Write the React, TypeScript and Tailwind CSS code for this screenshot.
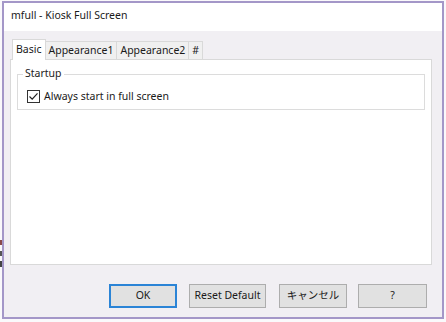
import React from "react";

const font = { fontFamily: '"Noto Sans", "Noto Sans CJK JP", sans-serif' };

function Tab({ label, selected }: { label: string; selected?: boolean }) {
  if (selected) {
    return (
      <div className="relative z-10 -mb-px flex h-[21px] items-center whitespace-nowrap border border-b-0 border-[#d9d9d9] bg-white px-[3px] text-[10.5px] text-[#1a1a1a]">
        {label}
      </div>
    );
  }
  return (
    <div className="-ml-px mt-[2px] flex h-[18px] items-center whitespace-nowrap border border-b-0 border-[#d9d9d9] bg-[#f0f0f0] px-[3px] text-[10.5px] text-[#1a1a1a]">
      {label}
    </div>
  );
}

function Btn({ label, w, primary, className = "" }: { label: string; w: string; primary?: boolean; className?: string }) {
  return (
    <div
      className={`flex h-[24px] items-center justify-center whitespace-nowrap text-[10.5px] text-[#1a1a1a] ${w} ${
        primary ? "border-2 border-[#2b84d6] bg-[#e1e1e1]" : "border border-[#adadad] bg-[#e1e1e1]"
      } ${className}`}
    >
      {label}
    </div>
  );
}

export default function App() {
  return (
    <div className="relative h-[322px] w-[446px] overflow-hidden bg-[#faf9fb]" style={font}>
      {/* desktop bits behind the window */}
      <div className="absolute left-0 top-[240px] h-[5px] w-[2px] bg-[#8a4a4a]" />
      <div className="absolute left-0 top-[251px] h-[5px] w-[2px] bg-[#555]" />
      <div className="absolute left-0 top-[261px] h-[6px] w-[2px] bg-[#444]" />

      <div className="ml-[2px] mt-[1px] flex h-[318px] w-[442px] flex-col border-2 border-[#a497c8] bg-[#f1eff3]">
        {/* title bar */}
        <div className="flex h-[28px] items-center whitespace-nowrap bg-white pb-[2px] pl-[7px] text-[10.5px] text-[#1a1a1a]">
          mfull - Kiosk Full Screen
        </div>

        {/* body */}
        <div className="flex flex-1 flex-col pl-[6px] pr-[10px] pt-[8px]">
          <div className="flex items-start pl-[2px]">
            <Tab label="Basic" selected />
            <Tab label="Appearance1" />
            <Tab label="Appearance2" />
            <Tab label="#" />
          </div>
          <div className="h-[206px] border border-[#d9d9d9] bg-white px-[6px] pt-[14px]">
            <div className="relative h-[36px] border border-[#dcdcdc]">
              <div className="absolute -top-[10px] left-[5px] whitespace-nowrap bg-white px-[2px] text-[10.5px] leading-[16px] text-[#1a1a1a]">
                Startup
              </div>
              <div className="flex items-center pl-[9px] pt-[14px]">
                <div className="flex h-[13px] w-[13px] items-center justify-center border border-[#333] bg-white">
                  <svg width="11" height="11" viewBox="0 0 11 11">
                    <path d="M1.5 5.5 L4.2 8.2 L9.5 2.3" fill="none" stroke="#222" strokeWidth="1.2" />
                  </svg>
                </div>
                <span className="ml-[4px] whitespace-nowrap text-[10.5px] leading-[14px] text-[#1a1a1a]">
                  Always start in full screen
                </span>
              </div>
            </div>
          </div>

          <div className="mt-[19px] flex justify-end pr-[5px]">
            <Btn label="OK" w="w-[68px]" primary />
            <Btn label="Reset Default" w="w-[77px]" className="ml-[12px]" />
            <Btn label="キャンセル" w="w-[68px]" className="ml-[13px]" />
            <Btn label="?" w="w-[69px]" className="ml-[11px]" />
          </div>
        </div>
      </div>
    </div>
  );
}
